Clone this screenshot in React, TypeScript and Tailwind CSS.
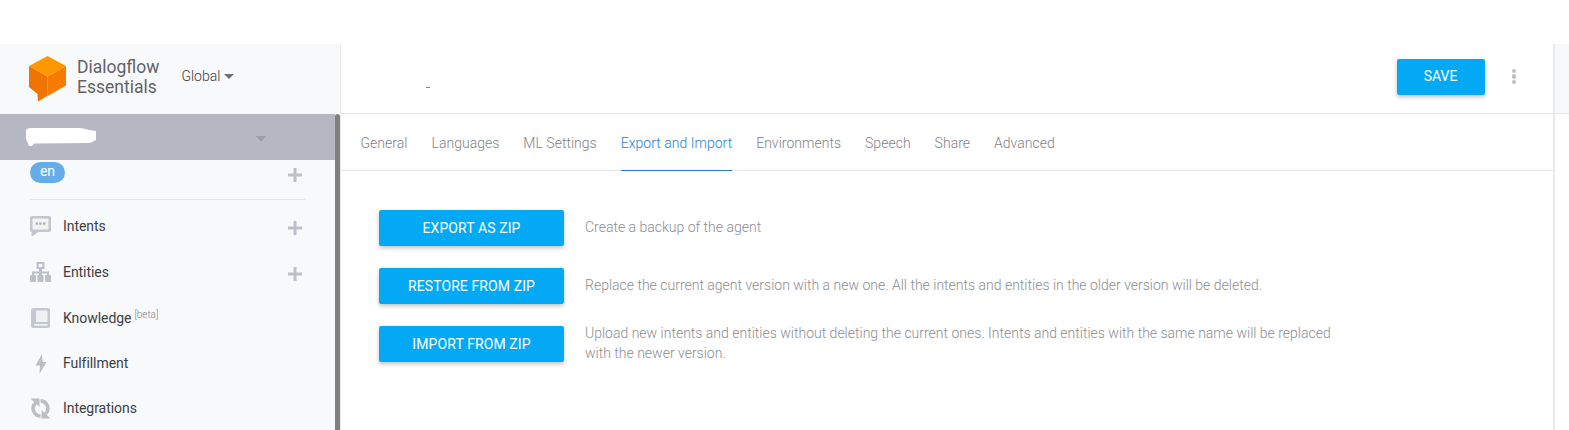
const tabs = ["General", "Languages", "ML Settings", "Export and Import", "Environments", "Speech", "Share", "Advanced"];

const actions = [
  { label: "EXPORT AS ZIP", text: "Create a backup of the agent" },
  { label: "RESTORE FROM ZIP", text: "Replace the current agent version with a new one. All the intents and entities in the older version will be deleted." },
  {
    label: "IMPORT FROM ZIP",
    text: "Upload new intents and entities without deleting the current ones. Intents and entities with the same name will be replaced with the newer version.",
  },
];

function Logo() {
  return (
    <svg width="37" height="46" viewBox="0 0 37 46">
      <path d="M18.5 0 L37 10 L18.5 20.5 L0 10 Z" fill="#ff9800" />
      <path d="M0 10 L18.5 20.5 L18.5 39.5 L9 45.5 L8.5 38 L0 31 Z" fill="#f07400" />
      <path d="M37 10 L37 29.5 L9 45.5 L18.5 39.5 L18.5 20.5 Z" fill="#f57c00" />
    </svg>
  );
}

function PlusMark() {
  return (
    <svg width="14" height="14" viewBox="0 0 14 14">
      <path d="M5.5 0 H8.5 V5.5 H14 V8.5 H8.5 V14 H5.5 V8.5 H0 V5.5 H5.5 Z" fill="#bcc0c8" />
    </svg>
  );
}

function IntentsIcon() {
  return (
    <svg width="21" height="20" viewBox="0 0 21 20">
      <path d="M2 0 H19 A2 2 0 0 1 21 2 V14 A2 2 0 0 1 19 16 H8 L3 20 H1.5 V16 A1.5 1.5 0 0 1 0 14.5 V2 A2 2 0 0 1 2 0 Z" fill="#c3c7cf" />
      <rect x="2.5" y="2.5" width="16" height="11" fill="#f1f2f4" />
      <rect x="5.5" y="6.5" width="2.6" height="2.2" fill="#aeb2ba" />
      <rect x="9.2" y="6.5" width="2.6" height="2.2" fill="#aeb2ba" />
      <rect x="12.9" y="6.5" width="2.6" height="2.2" fill="#aeb2ba" />
    </svg>
  );
}

function EntitiesIcon() {
  return (
    <svg width="21" height="20" viewBox="0 0 21 20">
      <path d="M6.5 0 H14.5 V7 H12 V9.5 H19 V13 H17 V11.5 H12 V13 H9 V11.5 H4 V13 H2 V9.5 H9 V7 H6.5 Z M8.7 2 V5 H12.3 V2 Z" fill="#bcc0c8" fillRule="evenodd" />
      <rect x="0" y="13" width="6" height="7" rx="1" fill="#bcc0c8" />
      <rect x="7.5" y="13" width="6" height="7" rx="1" fill="#bcc0c8" />
      <rect x="15" y="13" width="6" height="7" rx="1" fill="#bcc0c8" />
    </svg>
  );
}

function KnowledgeIcon() {
  return (
    <svg width="19" height="20" viewBox="0 0 19 20">
      <path d="M2.5 0 H17 A2 2 0 0 1 19 2 V18 A2 2 0 0 1 17 20 H2.5 A2.5 2.5 0 0 1 0 17.5 V2.5 A2.5 2.5 0 0 1 2.5 0 Z" fill="#c3c7cf" />
      <path d="M5 2.5 H16.5 V14 H5 Z" fill="#eef0f2" />
      <path d="M3 16 H16.5 V17.8 H3 Z" fill="#eef0f2" />
    </svg>
  );
}

function BoltIcon() {
  return (
    <svg width="12" height="20" viewBox="0 0 12 20">
      <path d="M7 0 L0.5 11.5 H5 L4.5 20 L11.5 8 H7.5 Z" fill="#bcbec3" />
    </svg>
  );
}

function SyncIcon() {
  return (
    <svg width="21" height="21" viewBox="0 0 21 21">
      <path d="M5.5 5 A7.6 7.6 0 0 0 10.5 18.1" fill="none" stroke="#bcbec3" strokeWidth="3.6" />
      <path d="M0.5 0.5 H9.5 V9 Z" fill="#bcbec3" />
      <path d="M15.5 16 A7.6 7.6 0 0 0 10.5 2.9" fill="none" stroke="#bcbec3" strokeWidth="3.6" />
      <path d="M20.5 20.5 H11.5 V12 Z" fill="#bcbec3" />
    </svg>
  );
}

function NavRow({ icon, label, plus, beta, short }: { icon: React.ReactNode; label: string; plus?: boolean; beta?: boolean; short?: boolean }) {
  return (
    <div className={short ? "h-[45px] flex items-center pl-[30px] pr-[33px]" : "h-[46px] flex items-center pl-[30px] pr-[33px]"}>
      <div className="w-[21px] shrink-0 flex justify-center">{icon}</div>
      <div className="ml-[12px] text-[14px] text-[#3c4043] tracking-[-0.05px]">
        {label}
        {beta && <sup className="text-[10px] font-light text-[#80848a] ml-[3px] -top-[5px]">[beta]</sup>}
      </div>
      {plus && (
        <div className="ml-auto mt-[4px]">
          <PlusMark />
        </div>
      )}
    </div>
  );
}

export default function App() {
  return (
    <div className="h-[430px] w-[1569px] overflow-hidden bg-white font-['Roboto',sans-serif] pt-[44px] flex">
      {/* sidebar */}
      <div className="w-[341px] shrink-0 bg-[#f8f9fa] border-r border-[#e8e9eb] flex flex-col">
        <div className="h-[70px] shrink-0 flex items-center pl-[29px]">
          <Logo />
          <div className="ml-[11px] -mt-[4px] text-[17.5px] leading-[20px] text-[#5f6368]">
            <div>Dialogflow</div>
            <div>Essentials</div>
          </div>
          <div className="ml-[22px] -mt-[6px] flex items-center text-[14px] font-light text-[#3c4043]">
            Global
            <span className="ml-[4px] mt-[1px] border-x-[5px] border-t-[5px] border-x-transparent border-t-[#6b6f76]" />
          </div>
        </div>
        <div className="flex-1 flex min-h-0">
          <div className="flex-1 min-w-0">
            <div className="h-[46px] bg-[#b5b8c3] flex items-center pl-[26px] pr-[69px]">
              <svg width="70" height="18" viewBox="0 0 70 18">
                <path d="M0 2 Q1 0 5 0 L52 0 Q58 0 63 2 L70 3 V12 L64 15 L8 15.5 L6 18 L3 18 L0 11 Z" fill="#ffffff" />
              </svg>
              <span className="ml-auto mt-[3px] border-x-[5.5px] border-t-[6px] border-x-transparent border-t-[#9b9ea8]" />
            </div>
            <div className="h-[39px] flex items-start pl-[30px] pr-[33px]">
              <span className="mt-[2px] h-[21px] w-[35px] rounded-full bg-[#64ade8] text-white text-[14px] leading-[19px] text-center">en</span>
              <div className="ml-auto mt-[8px]">
                <PlusMark />
              </div>
            </div>
            <div className="ml-[30px] mr-[30px] border-t border-[#e3e4e6] h-[4px]" />
            <NavRow icon={<IntentsIcon />} label="Intents" plus />
            <NavRow icon={<EntitiesIcon />} label="Entities" plus />
            <NavRow icon={<KnowledgeIcon />} label="Knowledge" beta />
            <NavRow icon={<BoltIcon />} label="Fulfillment" short />
            <NavRow icon={<SyncIcon />} label="Integrations" short />
          </div>
          <div className="w-[5px] shrink-0 bg-[#808080] rounded-t-[3px]" />
        </div>
      </div>

      {/* main */}
      <div className="flex-1 min-w-0 flex flex-col">
        <div className="h-[70px] shrink-0 border-b border-[#e3e4e6] flex items-center pr-[37px]">
          <span className="ml-[85px] mt-[17px] h-[1px] w-[4px] bg-[#888888]" />
          <button className="ml-auto h-[36px] w-[88px] rounded-[2px] bg-[#03a9f4] text-white text-[14px] shadow-[0_2px_4px_rgba(0,0,0,0.25)] -mt-[4px]">
            SAVE
          </button>
          <div className="ml-[27px] -mt-[4px] flex flex-col gap-[1.2px]">
            <span className="h-[4.5px] w-[4.5px] rounded-full bg-[#bcc0c8]" />
            <span className="h-[4.5px] w-[4.5px] rounded-full bg-[#bcc0c8]" />
            <span className="h-[4.5px] w-[4.5px] rounded-full bg-[#bcc0c8]" />
          </div>
        </div>
        <div className="h-[57px] shrink-0 border-b border-[#e3e4e6] flex pl-[19.5px] gap-[24px] text-[14px] font-light text-[#7f8286] tracking-[0.02px]">
          {tabs.map((t) =>
            t === "Export and Import" ? (
              <div key={t} className="h-[57px] leading-[58px] text-[#1e7fcb] border-b border-[#1e7fcb]">
                {t}
              </div>
            ) : (
              <div key={t} className="leading-[58px]">
                {t}
              </div>
            ),
          )}
        </div>
        <div className="pt-[39px] pl-[38px] flex flex-col gap-[22px]">
          {actions.map((a) => (
            <div key={a.label} className="h-[36px] flex items-center gap-[21px]">
              <button className="h-[36px] w-[185px] shrink-0 rounded-[2px] bg-[#03a9f4] text-white text-[14px] tracking-[0.1px] shadow-[0_2px_4px_rgba(0,0,0,0.25)]">
                {a.label}
              </button>
              <div className="w-[760px] -mt-[2px] text-[14px] font-light leading-[20px] text-[#8b8d91]">{a.text}</div>
            </div>
          ))}
        </div>
      </div>

      {/* right strip */}
      <div className="w-[16px] shrink-0 border-l-2 border-[#e8e9eb]">
        <div className="h-[70px] bg-[#f8f9fa] border-b border-[#e3e4e6]" />
      </div>
    </div>
  );
}
